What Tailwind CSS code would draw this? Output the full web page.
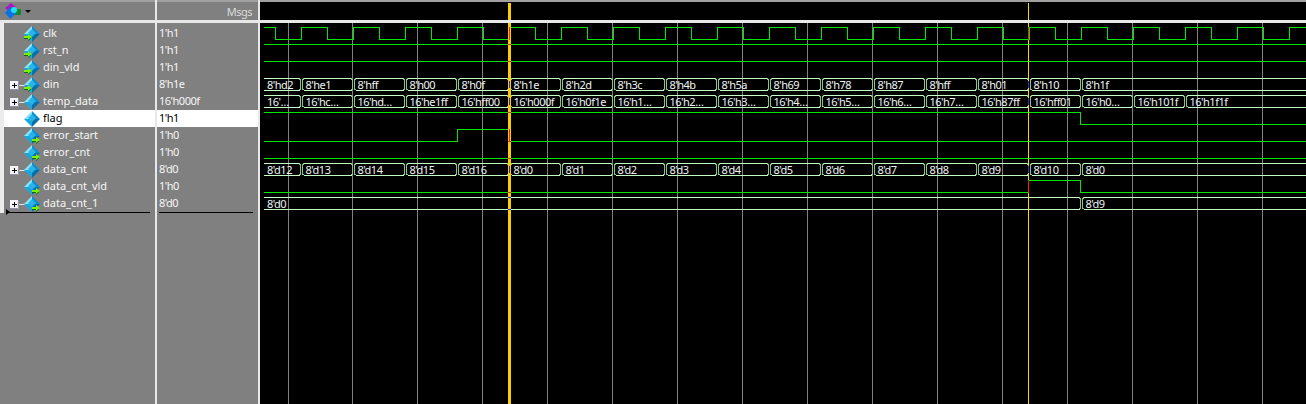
<!DOCTYPE html>
<html lang="en">
<head>
  <meta charset="UTF-8">
  <title>Wave</title>
  <script src="https://cdn.jsdelivr.net/npm/@tailwindcss/browser@4"></script>
</head>
<body class="bg-black overflow-hidden">
  <!-- icon defs -->
  <svg width="0" height="0" class="absolute">
    <defs>
      <symbol id="dia" viewBox="0 0 16 16">
        <polygon points="8,0 16,8 8,8" fill="#0a8ed0"/>
        <polygon points="8,0 0,8 8,8" fill="#8fe4f4"/>
        <polygon points="0,8 8,8 8,16" fill="#18a8e0"/>
        <polygon points="16,8 8,8 8,16" fill="#0670a8"/>
        <polygon points="8,3 12,7 8,11 4,7" fill="#26b4ea"/>
      </symbol>
      <symbol id="arrow" viewBox="0 0 8 7">
        <path d="M0 2h4V0l4 3-4 3V4H0z" fill="#7cf000"/>
        <path d="M0 4h4v2l3-2.500v1L4 7V5H0z" fill="#0a6a10"/>
      </symbol>
      <symbol id="plus" viewBox="0 0 9 9">
        <rect x="0" y="0" width="9" height="9" fill="#f4f4fa"/>
        <path d="M8.500 0v8.500H0" fill="none" stroke="#9090a8"/>
        <path d="M2 4.500h5M4.500 2v5" stroke="#000"/>
      </symbol>
    </defs>
  </svg>

  <div class="flex h-[404px] w-[1306px] font-['Noto_Sans',sans-serif] text-[11px] leading-[17px]">
    <!-- names -->
    <div class="w-[155px] bg-[#808080] flex flex-col border-t-2 border-[#a0a0a0]">
      <div class="h-[18px] flex items-center pl-[5px] gap-[3px]">
        <svg width="17" height="17" viewBox="0 0 17 17">
          <polygon points="6,0 11,4 5,9 0,5" fill="#a020c0"/>
          <rect x="10" y="6" width="6" height="6" fill="#108a30"/>
          <polygon points="5.500,4 11,10 5.500,16 0,10" fill="#0870e8"/>
          <circle cx="9" cy="7" r="3" fill="#20e0f0"/>
        </svg>
        <span class="w-0 h-0 border-x-[3px] border-x-transparent border-t-[3px] border-t-black"></span>
      </div>
      <div class="h-[3px] bg-[#e8e8e8]"></div>
      <div class="flex-1 flex">
        <div class="w-[4px] h-[190px] bg-[#ececec]"></div>
        <div class="flex-1 flex flex-col pt-[2px] text-[#f6f6f6] relative">
          <div class="h-[17px] flex items-center pb-[2px] relative pl-[39px]"><svg class="absolute left-[20px] top-px" width="16" height="16"><use href="#dia"/></svg><svg class="absolute left-[20px] top-[9px]" width="8" height="7"><use href="#arrow"/></svg>clk</div>
          <div class="h-[17px] flex items-center pb-[2px] relative pl-[39px]"><svg class="absolute left-[20px] top-px" width="16" height="16"><use href="#dia"/></svg><svg class="absolute left-[20px] top-[9px]" width="8" height="7"><use href="#arrow"/></svg>rst_n</div>
          <div class="h-[17px] flex items-center pb-[2px] relative pl-[39px]"><svg class="absolute left-[20px] top-px" width="16" height="16"><use href="#dia"/></svg><svg class="absolute left-[20px] top-[9px]" width="8" height="7"><use href="#arrow"/></svg>din_vld</div>
          <div class="h-[17px] flex items-center pb-[2px] relative pl-[39px]"><svg class="absolute left-[6px] top-[5px]" width="9" height="9"><use href="#plus"/></svg><span class="absolute left-[15px] top-[9px] w-[6px] h-px bg-[#e8e8e8]"></span><svg class="absolute left-[20px] top-px" width="16" height="16"><use href="#dia"/></svg><svg class="absolute left-[20px] top-[9px]" width="8" height="7"><use href="#arrow"/></svg>din</div>
          <div class="h-[17px] flex items-center pb-[2px] relative pl-[39px]"><svg class="absolute left-[6px] top-[5px]" width="9" height="9"><use href="#plus"/></svg><span class="absolute left-[15px] top-[9px] w-[6px] h-px bg-[#e8e8e8]"></span><svg class="absolute left-[20px] top-px" width="16" height="16"><use href="#dia"/></svg>temp_data</div>
          <div class="h-[17px] flex items-center pb-[2px] relative pl-[39px] bg-white text-black"><svg class="absolute left-[20px] top-px" width="16" height="16"><use href="#dia"/></svg>flag</div>
          <div class="h-[17px] flex items-center pb-[2px] relative pl-[39px]"><svg class="absolute left-[20px] top-px" width="16" height="16"><use href="#dia"/></svg><svg class="absolute left-[28px] top-[10px]" width="8" height="7"><use href="#arrow"/></svg>error_start</div>
          <div class="h-[17px] flex items-center pb-[2px] relative pl-[39px]"><svg class="absolute left-[20px] top-px" width="16" height="16"><use href="#dia"/></svg><svg class="absolute left-[28px] top-[10px]" width="8" height="7"><use href="#arrow"/></svg>error_cnt</div>
          <div class="h-[17px] flex items-center pb-[2px] relative pl-[39px]"><svg class="absolute left-[6px] top-[5px]" width="9" height="9"><use href="#plus"/></svg><span class="absolute left-[15px] top-[9px] w-[6px] h-px bg-[#e8e8e8]"></span><svg class="absolute left-[20px] top-px" width="16" height="16"><use href="#dia"/></svg>data_cnt</div>
          <div class="h-[17px] flex items-center pb-[2px] relative pl-[39px]"><svg class="absolute left-[20px] top-px" width="16" height="16"><use href="#dia"/></svg><svg class="absolute left-[28px] top-[10px]" width="8" height="7"><use href="#arrow"/></svg>data_cnt_vld</div>
          <div class="h-[17px] flex items-center pb-[2px] relative pl-[39px]"><svg class="absolute left-[6px] top-[5px]" width="9" height="9"><use href="#plus"/></svg><span class="absolute left-[15px] top-[9px] w-[6px] h-px bg-[#e8e8e8]"></span><svg class="absolute left-[20px] top-px" width="16" height="16"><use href="#dia"/></svg><svg class="absolute left-[28px] top-[10px]" width="8" height="7"><use href="#arrow"/></svg>data_cnt_1</div>
          <div class="h-px ml-[3px] mr-[5px] bg-black relative"><span class="absolute -left-px -top-[3px] w-0 h-0 border-y-[3px] border-y-transparent border-l-[4px] border-l-black"></span></div>
        </div>
      </div>
    </div>
    <div class="w-[2px] bg-[#e8e8e8]"></div>

    <!-- values -->
    <div class="w-[101px] bg-[#808080] flex flex-col border-t-2 border-[#a0a0a0] text-[#f6f6f6] tracking-[-0.5px]">
      <div class="h-[18px] flex items-center justify-end pr-[6px] text-[#dcdcdc]">Msgs</div>
      <div class="h-[3px] bg-[#e8e8e8]"></div>
      <div class="flex flex-col pt-[2px] leading-[15px]">
        <div class="h-[17px] pl-[2px]">1'h1</div>
        <div class="h-[17px] pl-[2px]">1'h1</div>
        <div class="h-[17px] pl-[2px]">1'h1</div>
        <div class="h-[17px] pl-[2px]">8'h1e</div>
        <div class="h-[17px] pl-[2px]">16'h000f</div>
        <div class="h-[17px] pl-[2px] bg-white text-black">1'h1</div>
        <div class="h-[17px] pl-[2px]">1'h0</div>
        <div class="h-[17px] pl-[2px]">1'h0</div>
        <div class="h-[17px] pl-[2px]">8'd0</div>
        <div class="h-[17px] pl-[2px]">1'h0</div>
        <div class="h-[17px] pl-[2px]">8'd0</div>
        <div class="h-px ml-[2px] mr-[5px] bg-black"></div>
      </div>
    </div>
    <div class="w-[2px] bg-[#e8e8e8]"></div>

    <!-- waves, drawn in screen coordinates -->
    <div class="flex-1 bg-black">
      <svg id="wave" class="block" width="1046" height="404" viewBox="260 0 1046 404" shape-rendering="crispEdges"></svg>
    </div>
  </div>

  <script>
    const GREEN = '#00e800', BUS = '#c4ffc4', BUS_END = '#84c884', END = 1306, START = 264;
    const edge = k => Math.round(301.3 + 51.96 * k) + 0.5;
    let out = '';
    const line = (d, c) => { out += `<path d="${d}" fill="none" stroke="${c}"/>`; };

    out += '<rect x="260" y="0" width="1046" height="2" fill="#a0a0a0"/>';
    out += '<rect x="260" y="20" width="1046" height="3" fill="#e8e8e8"/>';

    // grid
    for (let i = 0; i < 16; i++) {
      const x = Math.floor(288 + 64.95 * i) + 0.5;
      line(`M${x} 23V404`, '#808080');
    }

    // clock
    let clk = `M${START} 27.500H275.500V39.500`;
    for (let k = 0; k < 20; k++) {
      const r = edge(k), f = k < 19 ? Math.round(327.3 + 51.96 * k) + 0.5 : END;
      clk += `H${r}V27.500H${f}` + (k < 19 ? 'V39.500' : '');
    }
    line(clk, GREEN);

    // flat and single-step signals
    line(`M${START} 44.500H${END}`, GREEN);
    line(`M${START} 61.500H${END}`, GREEN);
    line(`M${START} 112.500H1080.500V124.500H${END}`, GREEN);
    line(`M${START} 141.500H457.500V129.500H509.500V141.500H${END}`, GREEN);
    line(`M${START} 158.500H${END}`, GREEN);
    line(`M${START} 192.500H1028.500V180.500H1080.500V192.500H${END}`, GREEN);

    // buses: [top, [[edge index or -1, label]...]]
    const seq = (labels, from) => labels.map((t, i) => [from + i, t]);
    const buses = [
      [78, seq(["8'hd2","8'he1","8'hff","8'h00","8'h0f","8'h1e","8'h2d","8'h3c","8'h4b","8'h5a","8'h69","8'h78","8'h87","8'hff","8'h01","8'h10","8'h1f"], -1)],
      [95, seq(["16'…","16'hc…","16'hd…","16'he1ff","16'hff00","16'h000f","16'h0f1e","16'h1…","16'h2…","16'h3…","16'h4…","16'h5…","16'h6…","16'h7…","16'h87ff","16'hff01","16'h0…","16'h101f","16'h1f1f"], -1)],
      [163, seq(["8'd12","8'd13","8'd14","8'd15","8'd16","8'd0","8'd1","8'd2","8'd3","8'd4","8'd5","8'd6","8'd7","8'd8","8'd9","8'd10","8'd0"], -1)],
      [197, [[-1, "8'd0"], [15, "8'd9"]]],
    ];
    let labels = '';
    for (const [top, segs] of buses) {
      const t = top + 0.5, b = top + 12.5;
      segs.forEach(([k, text], i) => {
        const x0 = k < 0 ? START : edge(k);
        const next = segs[i + 1];
        const x1 = next ? edge(next[0]) : END + 4;
        const l = k < 0 ? x0 : x0 + 2;
        const r = x1 - 2;
        line(`M${l} ${t}H${r}M${l} ${b}H${r}`, BUS);
        line(`M${r} ${t}L${r + 1} ${t + 2}V${b - 2}L${r} ${b}`, BUS_END);
        if (k >= 0) line(`M${l} ${t}L${l - 1} ${t + 2}V${b - 2}L${l} ${b}`, BUS_END);
        labels += `<text x="${k < 0 ? 267 : x0 + 4}" y="${top + 11}" fill="#eef4f4" font-size="11" letter-spacing="-0.5" shape-rendering="auto">${text}</text>`;
      });
    }
    out += labels;

    // cursors
    out += '<rect x="508" y="3" width="3" height="17" fill="#ffcc00"/><rect x="508" y="23" width="3" height="381" fill="#ffcc00"/>';
    out += '<rect x="1028" y="3" width="1" height="17" fill="#ffd800"/><rect x="1028" y="23" width="1" height="381" fill="#ffd800"/>';

    // red and blue marks where the cursors cross a change
    const RED = '#ff2000', BLUE = '#3030c0';
    line('M509.500 27V40', RED);
    line('M509.500 129V142', RED);
    for (const y of [44.5, 61.5, 112.5, 141.5, 158.5, 192.5]) line(`M508 ${y}H511`, RED);
    line('M509.500 81V88M509.500 98V105M509.500 166V173', BLUE);
    line('M508 197.500H511M508 209.500H511', BLUE);
    line('M1028.500 27V40M1028.500 180V193', RED);
    line('M1028.500 81V88M1028.500 98V105M1028.500 166V173', BLUE);

    document.getElementById('wave').innerHTML = out;
  </script>
</body>
</html>
